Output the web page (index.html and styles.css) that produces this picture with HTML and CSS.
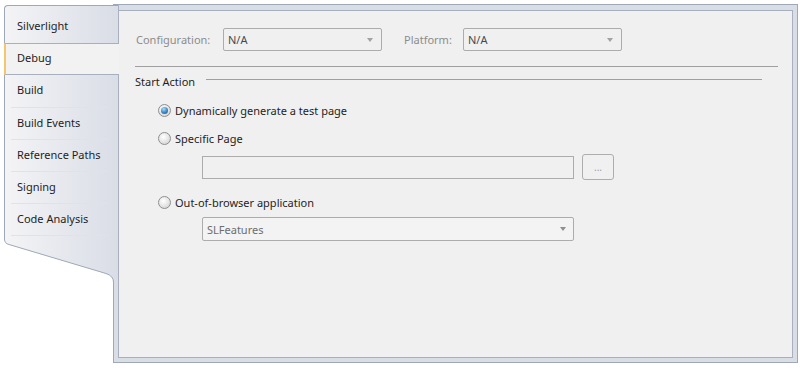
FILE: index.html
```html
<!DOCTYPE html>
<html lang="en">
<head>
  <meta charset="UTF-8">
  <meta name="viewport" content="width=device-width, initial-scale=1.0">
  <title>Debug</title>
  <link rel="stylesheet" href="styles.css">
</head>
<body>
  <div class="window">
    <nav class="tabs">
      <div class="tab-list">
        <div class="tab first">Silverlight</div>
        <div class="tab active">Debug</div>
        <div class="tab next">Build</div>
        <div class="tab">Build Events</div>
        <div class="tab">Reference Paths</div>
        <div class="tab">Signing</div>
        <div class="tab">Code Analysis</div>
      </div>
      <svg class="tail" width="114" height="50" viewBox="0 0 114 50">
        <defs>
          <linearGradient id="tailFill" x1="0" y1="0" x2="1" y2="0">
            <stop offset="0" stop-color="#f4f4f6"/>
            <stop offset="1" stop-color="#d9dde6"/>
          </linearGradient>
        </defs>
        <path d="M0.5 0 V3 Q0.5 7.5 5 8.5 L102 37.5 Q109.5 40 109.5 46 V50 H114 V0 Z" fill="url(#tailFill)"/>
        <path d="M0.5 0 V3 Q0.5 7.5 5 8.5 L102 37.5 Q109.5 40 109.5 46 V50" fill="none" stroke="#9ea8b8"/>
      </svg>
    </nav>

    <div class="frame">
      <div class="page">
        <div class="config-row">
          <span class="field-label config-label">Configuration:</span>
          <div class="combo disabled"><span>N/A</span><i class="arrow"></i></div>
          <span class="field-label platform-label">Platform:</span>
          <div class="combo disabled"><span>N/A</span><i class="arrow"></i></div>
        </div>

        <div class="divider"></div>

        <div class="group-title">
          <span>Start Action</span>
          <span class="rule"></span>
        </div>

        <label class="radio-row first-radio"><span class="radio checked"></span>Dynamically generate a test page</label>
        <label class="radio-row"><span class="radio"></span>Specific Page</label>

        <div class="path-row">
          <div class="textbox"></div>
          <button class="browse">...</button>
        </div>

        <label class="radio-row oob-radio"><span class="radio"></span>Out-of-browser application</label>

        <div class="combo app-combo"><span>SLFeatures</span><i class="arrow"></i></div>
      </div>
    </div>
  </div>
</body>
</html>
```

FILE: styles.css
```css
body {
  margin: 0;
  background: #fff;
  font-family: "Segoe UI", "Noto Sans", sans-serif;
  font-size: 11px;
  color: #1e1e1e;
}
.window {
  display: flex;
  align-items: flex-start;
  padding: 4px 0 0 4px;
}

/* left tab strip */
.tabs {
  width: 115px;
  margin-top: 1px;
  margin-right: -6px;
  position: relative;
  z-index: 1;
}
.tab-list {
  background: linear-gradient(to right, #f4f4f6, #d9dde6);
  border-top-left-radius: 4px;
}
.tab {
  height: 32px;
  line-height: 29px;
  padding-left: 12px;
  border-left: 1px solid #9ea8b8;
  border-right: 1px solid #a8b0bf;
  background: linear-gradient(#dfe2e8, #dfe2e8) no-repeat 6px 100% / 96px 1px;
}
.tab.first {
  height: 37px;
  line-height: 39px;
  border-top: 1px solid #9ea8b8;
  border-top-left-radius: 4px;
  background: none;
}
.tab.active {
  height: 30px;
  line-height: 28px;
  padding-left: 11px;
  border-top: 1px solid #a8b0bf;
  border-bottom: 1px solid #a8b0bf;
  border-left: 2px solid #f2c76e;
  border-right: none;
  background: #f2f2f2;
}
.tab.next {
  height: 33px;
  line-height: 30px;
}
.tail {
  display: block;
}

/* right panel */
.frame {
  box-sizing: border-box;
  width: 685px;
  height: 359px;
  display: flex;
  padding: 5px 4px 4px 4px;
  border: 1px solid #9ea8b8;
  background: #d8dde6;
}
.page {
  flex: 1;
  padding-left: 16px;
  border: 1px solid #a8b0bf;
  background: #f0f0f0;
}
.config-row {
  display: flex;
  align-items: center;
  margin-top: 17px;
  padding-left: 1px;
}
.field-label {
  color: #8c8c8c;
}
.config-label { width: 87px; }
.platform-label { width: 59px; margin-left: 22px; }

.combo {
  box-sizing: border-box;
  width: 159px;
  height: 23px;
  display: flex;
  align-items: center;
  justify-content: space-between;
  padding: 0 8px 0 4px;
  border: 1px solid #acacac;
  border-radius: 2px;
  background: #f0f0f0;
  color: #4a4a4a;
}
.arrow {
  width: 0;
  height: 0;
  border-left: 3.5px solid transparent;
  border-right: 3.5px solid transparent;
  border-top: 4px solid #a2a2a2;
}
.divider {
  height: 1px;
  margin: 15px 14px 0 0;
  background: #a0a0a0;
}
.group-title {
  display: flex;
  height: 16px;
  line-height: 15px;
  margin-top: 7px;
}
.group-title .rule {
  flex: 1;
  height: 1px;
  margin: 5px 30px 0 11px;
  background: #a0a0a0;
}
.radio-row {
  display: flex;
  align-items: center;
  height: 16px;
  margin: 12px 0 0 23px;
}
.radio-row.first-radio { margin-top: 12px; }
.radio-row.oob-radio { margin-top: 14px; }
.radio {
  box-sizing: border-box;
  width: 13px;
  height: 13px;
  margin-right: 4px;
  border: 1px solid #8e8f8f;
  border-radius: 50%;
  background: radial-gradient(circle at 40% 35%, #ffffff, #e4e4e4 55%, #c9c9c9);
  display: flex;
  align-items: center;
  justify-content: center;
}
.radio.checked::after {
  content: "";
  width: 7px;
  height: 7px;
  border-radius: 50%;
  background: radial-gradient(circle at 40% 30%, #a9dcfa, #3b84c4 55%, #174f80);
}
.path-row {
  display: flex;
  align-items: center;
  margin: 8px 0 0 67px;
}
.textbox {
  box-sizing: border-box;
  width: 372px;
  height: 23px;
  border: 1px solid #acacac;
  background: #f0f0f0;
}
.browse {
  box-sizing: border-box;
  width: 32px;
  height: 26px;
  margin-left: 8px;
  padding: 0;
  border: 1px solid #adadad;
  border-radius: 3px;
  background: #f0f0f0;
  color: #a0a0a0;
  font-family: inherit;
  font-size: 10px;
}
.app-combo {
  width: 372px;
  height: 24px;
  margin: 7px 0 0 67px;
  padding-right: 7px;
  background: #f3f3f3;
  color: #6d6d6d;
}
.app-combo .arrow {
  border-top-color: #8f8f8f;
}
```
